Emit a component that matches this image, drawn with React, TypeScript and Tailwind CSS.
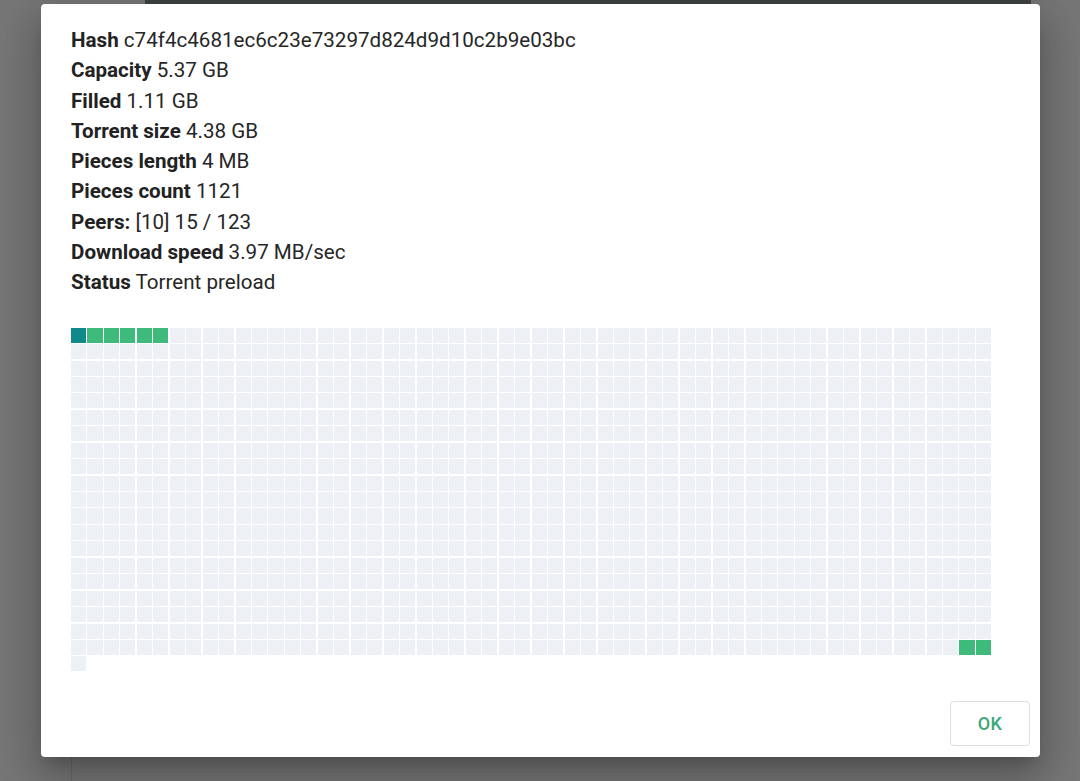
import React from 'react'

const info: [string, string][] = [
    ['Hash', 'c74f4c4681ec6c23e73297d824d9d10c2b9e03bc'],
    ['Capacity', '5.37 GB'],
    ['Filled', '1.11 GB'],
    ['Torrent size', '4.38 GB'],
    ['Pieces length', '4 MB'],
    ['Pieces count', '1121'],
    ['Peers:', '[10] 15 / 123'],
    ['Download speed', '3.97 MB/sec'],
    ['Status', 'Torrent preload'],
]

const PIECES = 1121

function pieceClass(i: number) {
    if (i === 0) return 'bg-[#10898b]'
    if ((i >= 1 && i <= 5) || i === 1118 || i === 1119) return 'bg-[#3dba7c]'
    return 'bg-[#edf1f5]'
}

export default function App() {
    let pieces = Array.from({length: PIECES}, (_, i) => i)

    return (
        <div className="relative h-[781px] w-[1080px] overflow-hidden bg-[#767676] font-['Roboto',sans-serif]">
            {/* things behind the overlay */}
            <div className="absolute left-[145px] top-0 h-[4px] w-[886px] bg-[#3f4242]"/>
            <div className="absolute left-[71px] top-[757px] h-[24px] w-px bg-[#6a6a6a]"/>

            <div className="absolute left-[41px] top-[4px] flex w-[999px] flex-col rounded-[4px] bg-white shadow-[0_11px_15px_-7px_rgba(0,0,0,0.2),0_24px_38px_3px_rgba(0,0,0,0.14),0_9px_46px_8px_rgba(0,0,0,0.12)]">
                <div className="px-[30px] pt-[21px]">
                    <div className="text-[20.6px] leading-[30.3px] text-[#262626]">
                        {info.map(([label, value]) => (
                            <div key={label}>
                                <span className="font-bold text-[#222]">{label}</span> {value}
                            </div>
                        ))}
                    </div>
                    <div className="mt-[30px] grid w-[920px] grid-cols-[repeat(56,minmax(0,1fr))] auto-rows-[15.05px] gap-[1.4px]">
                        {pieces.map((i) => (
                            <div key={i} className={pieceClass(i)}/>
                        ))}
                    </div>
                </div>
                <div className="mt-[30px] flex justify-end pb-[11px] pr-[10px]">
                    <button
                        type="button"
                        className="h-[45px] w-[80px] rounded-[4px] border border-[#d9e0e2] text-[18px] font-medium tracking-wide text-[#3aa877]"
                    >
                        OK
                    </button>
                </div>
            </div>
        </div>
    )
}
